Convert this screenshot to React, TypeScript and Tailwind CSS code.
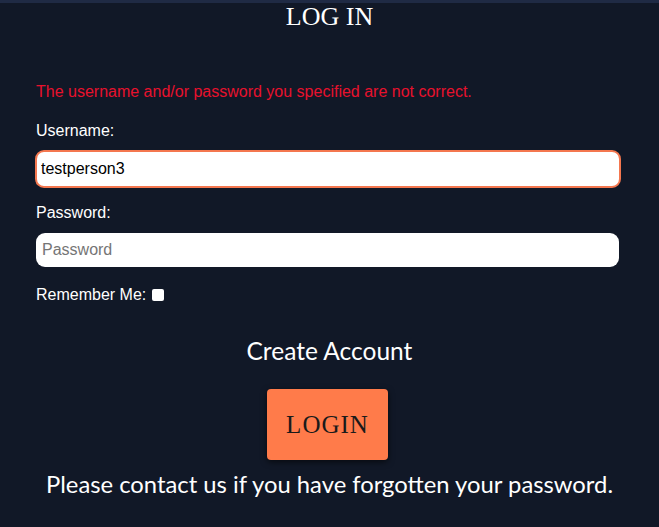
import React from 'react';

export default function App() {
  return (
    <div className="min-h-[527px] w-full bg-[#111827] text-white">
      <div className="h-[3px] bg-[#1f2a44]" />
      <h1 className="mt-0 text-center text-[26px] leading-[28px] text-white [font-family:'Liberation_Serif',serif]">
        LOG IN
      </h1>
      <form className="px-[36px] pt-[52px] [font-family:'Liberation_Sans',Arial,sans-serif]">
        <p className="text-[16px] leading-[18px] text-[#e8112d]">
          The username and/or password you specified are not correct.
        </p>
        <label className="mt-[21px] block text-[16px] leading-[18px]">Username:</label>
        <input
          type="text"
          defaultValue="testperson3"
          className="mt-[10px] block h-[38px] w-[586px] -ml-[1px] rounded-[9px] border-2 border-[#f4774f] bg-white px-[4px] text-[16px] text-black outline-none"
        />
        <label className="mt-[16px] block text-[16px] leading-[18px]">Password:</label>
        <input
          type="password"
          placeholder="Password"
          className="mt-[11px] block h-[34px] w-[583px] rounded-[9px] bg-white px-[6px] text-[16px] text-black outline-none placeholder:text-[#757575]"
        />
        <div className="mt-[19px] flex items-center text-[16px] leading-[18px]">
          <span>Remember Me:</span>
          <input type="checkbox" className="ml-[6px] h-[12px] w-[12px] appearance-none rounded-[2px] bg-white" />
        </div>
      </form>
      <div className="mt-[33px] text-center text-[24.5px] leading-[28px] [font-family:Lato,sans-serif]">
        Create Account
      </div>
      <div className="mt-[24px] flex justify-center">
        <button className="-ml-[4px] h-[71px] w-[121px] rounded-[4px] bg-[#ff7b4a] text-[25px] tracking-[1px] text-[#1a1a1a] shadow-[0_2px_6px_rgba(0,0,0,0.6)] [font-family:'Liberation_Serif',serif]">
          LOGIN
        </button>
      </div>
      <p className="mt-[10px] text-center text-[23.8px] leading-[28px] [font-family:Lato,sans-serif]">
        Please contact us if you have forgotten your password.
      </p>
    </div>
  );
}
